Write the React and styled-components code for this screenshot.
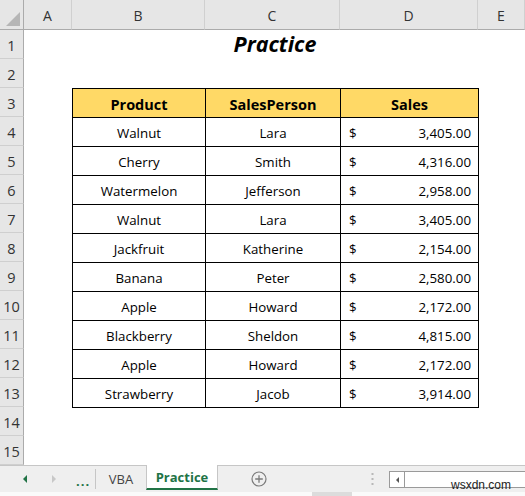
import React from "react";
import styled, { createGlobalStyle } from "styled-components";

const Global = createGlobalStyle`
  html, body { margin: 0; padding: 0; background: #fff; }
  body { width: 525px; height: 496px; overflow: hidden; font-family: "Open Sans", "Noto Sans", sans-serif; }
`;

const Frame = styled.div`
  width: 525px;
  height: 496px;
  display: flex;
  flex-direction: column;
  overflow: hidden;
`;

const Sheet = styled.div`
  display: grid;
  grid-template-columns: 24px 48px 133px 135px 138px 47px;
  grid-template-rows: 30px repeat(15, 29px);
  background: #fff;
`;

const Corner = styled.div`
  grid-column: 1;
  grid-row: 1;
  background: #e6e6e6;
  border-right: 1px solid #ababab;
  border-bottom: 1px solid #ababab;
  box-sizing: border-box;
  position: relative;
  &::after {
    content: "";
    position: absolute;
    right: 3px;
    bottom: 3px;
    width: 0;
    height: 0;
    border-left: 14px solid transparent;
    border-bottom: 14px solid #b6b6b6;
  }
`;

const ColHead = styled.div`
  grid-row: 1;
  grid-column: ${(p) => p.$col};
  background: #e6e6e6;
  border-bottom: 1px solid #ababab;
  border-right: 1px solid #d0d0d0;
  box-sizing: border-box;
  display: flex;
  align-items: center;
  justify-content: center;
  padding-top: 2px;
  font-family: "Open Sans", sans-serif;
  font-size: 14px;
  color: #333;
`;

const RowHead = styled.div`
  grid-column: 1;
  grid-row: ${(p) => p.$row};
  background: #e6e6e6;
  border-right: 1px solid #ababab;
  border-bottom: 1px solid #cfcfcf;
  box-sizing: border-box;
  display: flex;
  align-items: center;
  justify-content: center;
  padding-top: 2px;
  font-family: "Open Sans", sans-serif;
  font-size: 14.5px;
  color: #333;
`;

const Title = styled.div`
  grid-column: 3 / 6;
  grid-row: 2;
  display: flex;
  align-items: center;
  justify-content: center;
  padding-bottom: 2px;
  font-family: "Open Sans", sans-serif;
  font-weight: 700;
  font-style: italic;
  font-size: 21.5px;
  color: #000;
`;

const Table = styled.div`
  grid-column: 3 / 6;
  grid-row: 4 / 15;
  display: grid;
  grid-template-columns: 133px 135px 138px;
  grid-template-rows: repeat(11, 29px);
  border-top: 1px solid #000;
  border-left: 1px solid #000;
  box-sizing: border-box;
  width: 407px;
  height: 320px;
`;

const Cell = styled.div`
  border-right: 1px solid #000;
  border-bottom: 1px solid #000;
  box-sizing: border-box;
  display: flex;
  align-items: center;
  justify-content: center;
  padding-top: 2px;
  font-family: "Open Sans", sans-serif;
  color: #000;
  background: ${(p) => (p.$head ? "#ffd966" : "#fff")};
  font-weight: ${(p) => (p.$head ? 700 : 400)};
  font-size: ${(p) => (p.$head ? "14.5px" : "13.3px")};
`;

const MoneyCell = styled(Cell)`
  justify-content: space-between;
  padding: 2px 7px 0 8px;
`;

const TabBar = styled.div`
  height: 27px;
  background: #efefef;
  border-top: 1px solid #c6c6c6;
  display: flex;
  align-items: stretch;
  font-family: "Open Sans", sans-serif;
`;

const Nav = styled.div`
  width: 96px;
  display: flex;
  align-items: center;
  box-sizing: border-box;
  border-right: 1px solid #c6c6c6;
  margin: 3px 0;
`;

const Arrow = styled.span`
  width: 0;
  height: 0;
  border-top: 4px solid transparent;
  border-bottom: 4px solid transparent;
  ${(p) =>
    p.$dir === "left"
      ? `border-right: 4px solid #217346; margin-left: 23px;`
      : `border-left: 4px solid #c8c8c8; margin-left: 25px;`}
`;

const Dots = styled.span`
  margin-left: 20px;
  font-size: 13px;
  font-weight: 700;
  color: #217346;
  letter-spacing: 1px;
  position: relative;
  top: 2px;
`;

const Tab = styled.div`
  display: flex;
  align-items: center;
  justify-content: center;
  width: ${(p) => p.$w}px;
  box-sizing: border-box;
  font-size: 13px;
  color: ${(p) => (p.$active ? "#217346" : "#444")};
  font-weight: ${(p) => (p.$active ? 700 : 400)};
  background: ${(p) => (p.$active ? "#fff" : "transparent")};
  margin-top: ${(p) => (p.$active ? "-1px" : "0")};
  border-left: ${(p) => (p.$active ? "1px solid #c6c6c6" : "none")};
  border-right: ${(p) => (p.$active ? "1px solid #c6c6c6" : "none")};
  border-bottom: ${(p) => (p.$active ? "2px solid #217346" : "none")};
  margin-bottom: ${(p) => (p.$active ? "2px" : "0")};
`;

const AddWrap = styled.div`
  width: 82px;
  display: flex;
  align-items: center;
  justify-content: center;
`;

const Grip = styled.div`
  width: 89px;
  display: flex;
  align-items: center;
  justify-content: flex-end;
  padding-right: 15px;
  box-sizing: border-box;
`;

const Scroll = styled.div`
  flex: 1;
  display: flex;
  align-items: center;
  position: relative;
`;

const ScrollTrack = styled.div`
  height: 15px;
  flex: 1;
  border: 1px solid #9a9a9a;
  border-right: none;
  background: #fff;
  display: flex;
  margin-top: 1px;
`;

const ScrollBtn = styled.div`
  width: 14px;
  border-right: 1px solid #9a9a9a;
  display: flex;
  align-items: center;
  justify-content: center;
  &::before {
    content: "";
    border-top: 3px solid transparent;
    border-bottom: 3px solid transparent;
    border-right: 3px solid #555;
  }
`;

const Watermark = styled.span`
  position: absolute;
  left: 62px;
  bottom: 0px;
  font-family: "Liberation Sans", Arial, sans-serif;
  font-size: 12px;
  color: #222;
`;

const Bottom = styled.div`
  height: 4px;
  background: #fafafa;
  display: flex;
`;

const BottomMark = styled.div`
  margin-left: 312px;
  width: 40px;
  background: #dcdcdc;
`;

const cols = ["A", "B", "C", "D", "E"];

const data = [
  ["Walnut", "Lara", "3,405.00"],
  ["Cherry", "Smith", "4,316.00"],
  ["Watermelon", "Jefferson", "2,958.00"],
  ["Walnut", "Lara", "3,405.00"],
  ["Jackfruit", "Katherine", "2,154.00"],
  ["Banana", "Peter", "2,580.00"],
  ["Apple", "Howard", "2,172.00"],
  ["Blackberry", "Sheldon", "4,815.00"],
  ["Apple", "Howard", "2,172.00"],
  ["Strawberry", "Jacob", "3,914.00"],
];

export default function App() {
  return (
    <>
      <Global />
      <Frame>
        <Sheet>
          <Corner />
          {cols.map((c, i) => (
            <ColHead key={c} $col={i + 2}>
              {c}
            </ColHead>
          ))}
          {Array.from({ length: 15 }, (_, i) => (
            <RowHead key={i} $row={i + 2}>
              {i + 1}
            </RowHead>
          ))}
          <Title>Practice</Title>
          <Table>
            <Cell $head>Product</Cell>
            <Cell $head>SalesPerson</Cell>
            <Cell $head>Sales</Cell>
            {data.map((r, i) => (
              <React.Fragment key={i}>
                <Cell>{r[0]}</Cell>
                <Cell>{r[1]}</Cell>
                <MoneyCell>
                  <span>$</span>
                  <span>{r[2]}</span>
                </MoneyCell>
              </React.Fragment>
            ))}
          </Table>
        </Sheet>
        <TabBar>
          <Nav>
            <Arrow $dir="left" />
            <Arrow $dir="right" />
            <Dots>...</Dots>
          </Nav>
          <Tab $w={50}>VBA</Tab>
          <Tab $w={72} $active>
            Practice
          </Tab>
          <AddWrap>
            <svg width="16" height="16" viewBox="0 0 16 16">
              <circle cx="8" cy="8" r="7" fill="none" stroke="#7a7a7a" strokeWidth="1.2" />
              <path d="M8 4.2v7.6M4.2 8h7.6" stroke="#7a7a7a" strokeWidth="1.3" />
            </svg>
          </AddWrap>
          <Grip>
            <svg width="3" height="12" viewBox="0 0 3 12">
              <rect x="0.5" y="0" width="2" height="2" fill="#b8b8b8" />
              <rect x="0.5" y="5" width="2" height="2" fill="#b8b8b8" />
              <rect x="0.5" y="10" width="2" height="2" fill="#b8b8b8" />
            </svg>
          </Grip>
          <Scroll>
            <ScrollTrack>
              <ScrollBtn />
            </ScrollTrack>
            <Watermark>wsxdn.com</Watermark>
          </Scroll>
        </TabBar>
        <Bottom>
          <BottomMark />
        </Bottom>
      </Frame>
    </>
  );
}
